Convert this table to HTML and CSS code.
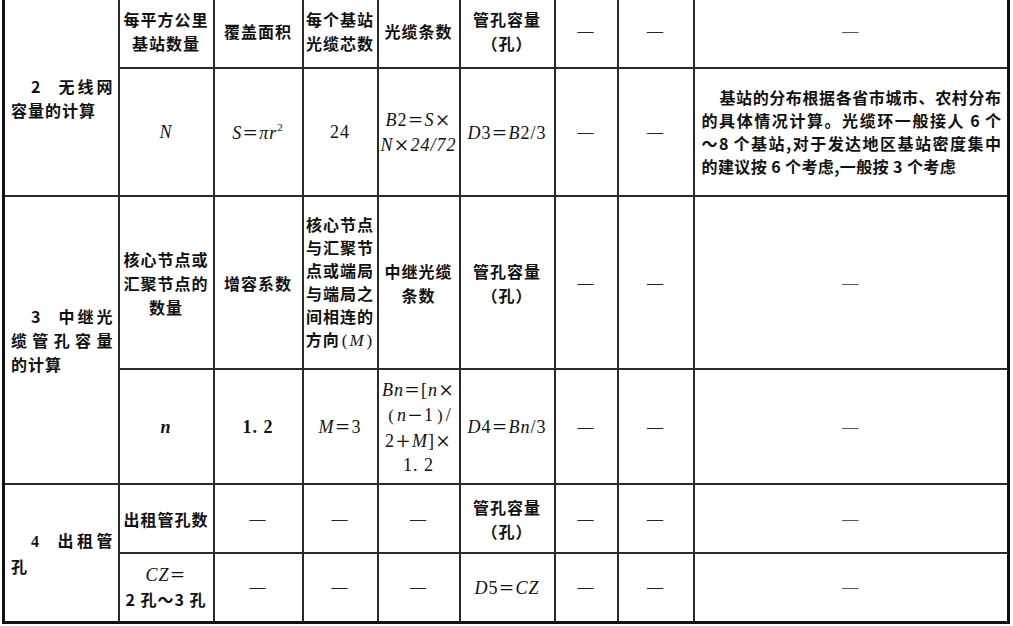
FILE: index.html
```html
<!DOCTYPE html>
<html lang="zh-CN">
<head>
<meta charset="utf-8">
<title>管孔容量计算表</title>
<link rel="stylesheet" href="styles.css">
</head>
<body>
<table class="tbl">
  <colgroup>
    <col class="c1"><col class="c2"><col class="c3"><col class="c4"><col class="c5"><col class="c6"><col class="c7"><col class="c8"><col class="c9">
  </colgroup>
  <tr class="r1">
    <td rowspan="2" class="item">
      <div class="jl"><span class="n">2</span>无线网</div>
      <div class="ll">容量的计算</div>
    </td>
    <td>每平方公里<br>基站数量</td>
    <td>覆盖面积</td>
    <td>每个基站<br>光缆芯数</td>
    <td>光缆条数</td>
    <td>管孔容量<br>（孔）</td>
    <td class="d">—</td>
    <td class="d">—</td>
    <td class="d thin">—</td>
  </tr>
  <tr class="r2">
    <td class="m"><i>N</i></td>
    <td class="m"><i>S</i><span class="eq">＝</span><i>π</i><i>r</i><sup>2</sup></td>
    <td class="m">24</td>
    <td class="m nw"><i>B</i>2<span class="eq">＝</span><i>S</i><span class="eq">×</span><br><i>N</i><span class="eq">×</span><i>24/72</i></td>
    <td class="m nw"><i>D</i>3<span class="eq">＝</span><i>B</i>2/3</td>
    <td class="d">—</td>
    <td class="d">—</td>
    <td class="para">
      <div class="pl ind">基站的分布根据各省市城市、农村分布</div>
      <div class="pl">的具体情况计算。光缆环一般接人 6 个</div>
      <div class="pl">～8 个基站,对于发达地区基站密度集中</div>
      <div class="plast">的建议按 6 个考虑,一般按 3 个考虑</div>
    </td>
  </tr>
  <tr class="r3">
    <td rowspan="2" class="item">
      <div class="jl"><span class="n">3</span>中继光</div>
      <div class="jl">缆管孔容量</div>
      <div class="ll">的计算</div>
    </td>
    <td>核心节点或<br>汇聚节点的<br>数量</td>
    <td>增容系数</td>
    <td class="tight">核心节点<br>与汇聚节<br>点或端局<br>与端局之<br>间相连的<br>方向<span class="pp">(</span><i class="mi">M</i><span class="pp">)</span></td>
    <td>中继光缆<br>条数</td>
    <td>管孔容量<br>（孔）</td>
    <td class="d">—</td>
    <td class="d">—</td>
    <td class="d thin">—</td>
  </tr>
  <tr class="r4">
    <td class="m"><i class="b">n</i></td>
    <td class="m"><span class="bd">1. 2</span></td>
    <td class="m"><i>M</i><span class="eq">＝</span>3</td>
    <td class="m nw"><i>Bn</i><span class="eq">＝</span>[<i>n</i><span class="eq">×</span><br><span class="pp">(</span><i>n</i><span class="eq">－</span>1<span class="pp">)</span>/<br>2<span class="eq">＋</span><i>M</i>]<span class="eq">×</span><br>1. 2</td>
    <td class="m nw"><i>D</i>4<span class="eq">＝</span><i>Bn</i>/3</td>
    <td class="d">—</td>
    <td class="d">—</td>
    <td class="d thin">—</td>
  </tr>
  <tr class="r5">
    <td rowspan="2" class="item">
      <div class="jl"><span class="n serif">4</span>出租管</div>
      <div class="ll">孔</div>
    </td>
    <td>出租管孔数</td>
    <td class="d">—</td>
    <td class="d">—</td>
    <td class="d">—</td>
    <td>管孔容量<br>（孔）</td>
    <td class="d">—</td>
    <td class="d">—</td>
    <td class="d thin">—</td>
  </tr>
  <tr class="r6">
    <td class="m"><i>CZ</i><span class="eq">＝</span><br><span class="cj">2 孔～3 孔</span></td>
    <td class="d">—</td>
    <td class="d">—</td>
    <td class="d">—</td>
    <td class="m nw"><i>D</i>5<span class="eq">＝</span><i>CZ</i></td>
    <td class="d">—</td>
    <td class="d">—</td>
    <td class="d thin">—</td>
  </tr>
</table>
</body>
</html>
```
FILE: styles.css
```css
html, body {
  margin: 0;
  padding: 0;
  background: #ffffff;
}

.tbl {
  border-collapse: collapse;
  table-layout: fixed;
  margin-left: 2px;
  width: 1008px;
  font-family: "Noto Sans CJK SC", sans-serif;
  font-size: 16px;
  font-weight: 700;
  color: #111111;
  border-left: 3px solid #111111;
  border-right: 3px solid #111111;
  border-bottom: 3px solid #111111;
  border-top: 0;
}

.c1 { width: 115px; }
.c2 { width: 95px; }
.c3 { width: 89px; }
.c4 { width: 75px; }
.c5 { width: 82px; }
.c6 { width: 95px; }
.c7 { width: 63px; }
.c8 { width: 76px; }
.c9 { width: 315px; }

.r1 { height: 68px; }
.r2 { height: 128px; }
.r3 { height: 173px; }
.r4 { height: 115px; }
.r5 { height: 69px; }
.r6 { height: 69px; }

.tbl td {
  border: 2px solid #2a2a2a;
  padding: 0 2px;
  text-align: center;
  vertical-align: middle;
  line-height: 24px;
  letter-spacing: 1px;
  white-space: nowrap;
}

.r1 td {
  border-top: 0;
  padding-bottom: 6px;
}

.tbl td.item {
  text-align: left;
  padding: 0 5px 0 6px;
}

.jl {
  text-align: justify;
  text-align-last: justify;
  letter-spacing: 0;
}

.ll {
  letter-spacing: 1px;
}

.n {
  display: inline-block;
  margin-left: 20px;
  margin-right: 15px;
}

.serif {
  font-family: "Liberation Serif", serif;
}

.m {
  font-family: "Liberation Serif", "Noto Sans CJK SC", serif;
  font-size: 18px;
  font-weight: 400;
  letter-spacing: 0;
}

.m i {
  font-style: italic;
}

.m .eq {
  font-family: "Noto Sans CJK SC", sans-serif;
  font-size: 16px;
  font-weight: 500;
  font-style: normal;
}

.m .cj {
  font-family: "Noto Sans CJK SC", sans-serif;
  font-size: 16px;
  font-weight: 700;
}

.m .bd {
  font-weight: 700;
  letter-spacing: 1px;
}

.m sup {
  font-size: 11px;
  line-height: 0;
  vertical-align: 8px;
}

.m .pp {
  padding: 0 3px;
}

.b {
  font-weight: 700;
}

.d {
  font-family: "Liberation Serif", serif;
  font-weight: 400;
  color: #222222;
}

.d.thin {
  color: #555555;
}

.tight {
  line-height: 23px !important;
}

.pp {
  font-family: "Liberation Serif", serif;
  font-weight: 400;
  font-size: 17px;
  padding: 0 2px;
  letter-spacing: 0;
}

.mi {
  font-family: "Liberation Serif", serif;
  font-size: 17px;
  font-weight: 400;
}

.tbl td.para {
  text-align: left;
  padding: 0 6px 0 7px;
  line-height: 23px;
  letter-spacing: 0;
}

.pl {
  text-align: justify;
  text-align-last: justify;
}

.ind {
  padding-left: 18px;
}

.plast {
  letter-spacing: 0.4px;
}
```
